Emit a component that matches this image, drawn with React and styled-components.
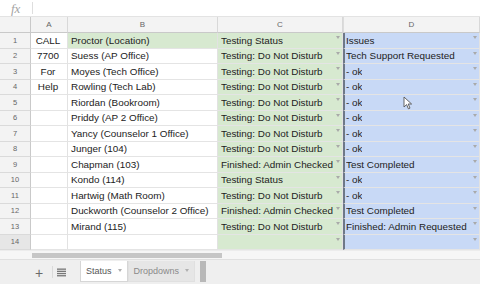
import React from "react";
import styled, { createGlobalStyle } from "styled-components";

const GlobalStyle = createGlobalStyle`
  html, body {
    margin: 0;
    padding: 0;
    background: #ffffff;
  }
  body {
    font-family: "Liberation Sans", Arial, sans-serif;
  }
`;

const rows = [
  ["CALL", "Proctor (Location)", "Testing Status", "Issues"],
  ["7700", "Suess (AP Office)", "Testing: Do Not Disturb", "Tech Support Requested"],
  ["For", "Moyes (Tech Office)", "Testing: Do Not Disturb", "- ok"],
  ["Help", "Rowling (Tech Lab)", "Testing: Do Not Disturb", "- ok"],
  ["", "Riordan (Bookroom)", "Testing: Do Not Disturb", "- ok"],
  ["", "Priddy (AP 2 Office)", "Testing: Do Not Disturb", "- ok"],
  ["", "Yancy (Counselor 1 Office)", "Testing: Do Not Disturb", "- ok"],
  ["", "Junger (104)", "Testing: Do Not Disturb", "- ok"],
  ["", "Chapman (103)", "Finished: Admin Checked", "Test Completed"],
  ["", "Kondo (114)", "Testing Status", "- ok"],
  ["", "Hartwig (Math Room)", "Testing: Do Not Disturb", "- ok"],
  ["", "Duckworth (Counselor 2 Office)", "Finished: Admin Checked", "Test Completed"],
  ["", "Mirand (115)", "Testing: Do Not Disturb", "Finished: Admin Requested"],
  ["", "", "", ""],
];

const fills = {
  white: "#ffffff",
  green: "#d7e9d0",
  blue: "#c8d9f6",
};

const App = () => {
  return (
    <Page>
      <GlobalStyle />
      <FormulaBar>
        <Fx>fx</Fx>
        <FxDivider />
      </FormulaBar>

      <Sheet>
        <Corner />
        <ColHead>A</ColHead>
        <ColHead>B</ColHead>
        <ColHead>C</ColHead>
        <ColHead $edge>D</ColHead>

        {rows.map((r, i) => (
          <React.Fragment key={i}>
            <RowHead $active={i === 13}>{i + 1}</RowHead>
            <Cell $center>{r[0]}</Cell>
            <Cell $fill={i === 0 ? fills.green : fills.white}>{r[1]}</Cell>
            <Cell $fill={fills.green}>
              <CellText>{r[2]}</CellText>
              <Arrow />
            </Cell>
            <Cell $fill={fills.blue} $edge>
              <CellText>{r[3]}</CellText>
              <Arrow />
            </Cell>
          </React.Fragment>
        ))}

        <Pointer width="10" height="14" viewBox="0 0 10 14">
          <path
            d="M1 1 L1 11 L3.6 8.6 L5.4 12.8 L7 12.1 L5.2 8 L8.6 8 Z"
            fill="#ffffff"
            stroke="#555"
            strokeWidth="0.9"
            strokeLinejoin="round"
          />
        </Pointer>
      </Sheet>

      <ScrollTrack>
        <ScrollThumb />
      </ScrollTrack>

      <TabBar>
        <IconButton>+</IconButton>
        <TabDivider />
        <ListIcon width="9" height="9" viewBox="0 0 9 9">
          <rect x="0" y="0.5" width="9" height="1.3" fill="#777" />
          <rect x="0" y="2.7" width="9" height="1.3" fill="#777" />
          <rect x="0" y="4.9" width="9" height="1.3" fill="#777" />
          <rect x="0" y="7.1" width="9" height="1.3" fill="#777" />
        </ListIcon>
        <Tabs>
          <Tab $active>
            Status
            <TabArrow />
          </Tab>
          <Tab>
            Dropdowns
            <TabArrow />
          </Tab>
          <TabScroll />
        </Tabs>
      </TabBar>
    </Page>
  );
};

const Page = styled.div`
  width: 480px;
  height: 284px;
  overflow: hidden;
  display: flex;
  flex-direction: column;
  background: #ffffff;
`;

const FormulaBar = styled.div`
  height: 17px;
  box-sizing: border-box;
  border-bottom: 1px solid #e3e3e3;
  display: flex;
  align-items: center;
  padding-left: 11px;
`;

const Fx = styled.span`
  font-family: "Liberation Serif", "Times New Roman", serif;
  font-style: italic;
  font-size: 13px;
  color: #a3a3a3;
  width: 21px;
  line-height: 1;
`;

const FxDivider = styled.div`
  width: 1px;
  height: 12px;
  background: #dedede;
`;

const Sheet = styled.div`
  position: relative;
  display: grid;
  grid-template-columns: 31px 37px 150px 125px 137px;
  grid-template-rows: 16px repeat(14, 15.5px);
  font-size: 10px;
  color: #222;
`;

const Corner = styled.div`
  background: #f3f3f3;
  box-sizing: border-box;
  border-right: 1px solid #c9c9c9;
  border-bottom: 1px solid #c9c9c9;
`;

const ColHead = styled.div`
  background: #f3f3f3;
  box-sizing: border-box;
  border-right: 1px solid #d8d8d8;
  border-bottom: 1px solid #c9c9c9;
  border-left: ${(p) => (p.$edge ? "1px solid #dcdcdc" : "none")};
  display: flex;
  align-items: center;
  justify-content: center;
  font-size: 8px;
  color: #666;
`;

const RowHead = styled.div`
  background: ${(p) => (p.$active ? "#e6e6e6" : "#f3f3f3")};
  box-sizing: border-box;
  border-right: 1px solid #c9c9c9;
  border-bottom: 1px solid #dadada;
  display: flex;
  align-items: center;
  justify-content: center;
  font-size: 7.5px;
  color: #666;
`;

const Cell = styled.div`
  background: ${(p) => p.$fill || "#ffffff"};
  box-sizing: border-box;
  border-right: 1px solid #e2e2e2;
  border-bottom: 1px solid #e4e4e4;
  border-left: ${(p) => (p.$edge ? "2px solid #6e7888" : "none")};
  display: flex;
  align-items: center;
  justify-content: ${(p) => (p.$center ? "center" : "space-between")};
  padding: 0 2px 0 ${(p) => (p.$center ? "0" : p.$edge ? "1px" : "3px")};
  white-space: nowrap;
  overflow: hidden;
  font-size: 9.9px;
`;

const CellText = styled.span`
  overflow: hidden;
`;

const Arrow = styled.span`
  width: 0;
  height: 0;
  border-left: 2.5px solid transparent;
  border-right: 2.5px solid transparent;
  border-top: 3px solid #a9a9a9;
  margin-bottom: 5px;
  flex-shrink: 0;
`;

const Pointer = styled.svg`
  position: absolute;
  left: 403px;
  top: 79px;
`;

const ScrollTrack = styled.div`
  height: 9px;
  box-sizing: border-box;
  background: #f6f6f6;
  border-top: 1px solid #ececec;
  padding: 2px 0 0 32px;
`;

const ScrollThumb = styled.div`
  width: 190px;
  height: 5px;
  background: #c6c6c6;
`;

const TabBar = styled.div`
  flex: 1;
  background: #efefef;
  border-top: 1px solid #e0e0e0;
  display: flex;
  align-items: center;
  padding-left: 33px;
`;

const IconButton = styled.span`
  font-size: 14px;
  color: #6a6a6a;
  width: 12px;
  text-align: center;
  line-height: 1;
  margin-top: 1px;
`;

const TabDivider = styled.div`
  width: 1px;
  height: 12px;
  background: #dadada;
  margin: 0 4px 0 7px;
`;

const ListIcon = styled.svg`
  margin-right: 14px;
`;

const Tabs = styled.div`
  display: flex;
  align-items: stretch;
  height: 21px;
  margin-top: -2px;
`;

const Tab = styled.div`
  display: flex;
  align-items: center;
  gap: 6px;
  padding: 0 5px 0 5px;
  font-size: 9px;
  color: ${(p) => (p.$active ? "#555" : "#8a8a8a")};
  background: ${(p) => (p.$active ? "#ffffff" : "#e6e6e6")};
  border: 1px solid ${(p) => (p.$active ? "#d6d6d6" : "#e0e0e0")};
  border-top: none;
`;

const TabArrow = styled.span`
  width: 0;
  height: 0;
  border-left: 2.5px solid transparent;
  border-right: 2.5px solid transparent;
  border-top: 3px solid #b0b0b0;
`;

const TabScroll = styled.div`
  width: 6px;
  margin-left: 5px;
  background: #b8b8b8;
`;

export default App;
